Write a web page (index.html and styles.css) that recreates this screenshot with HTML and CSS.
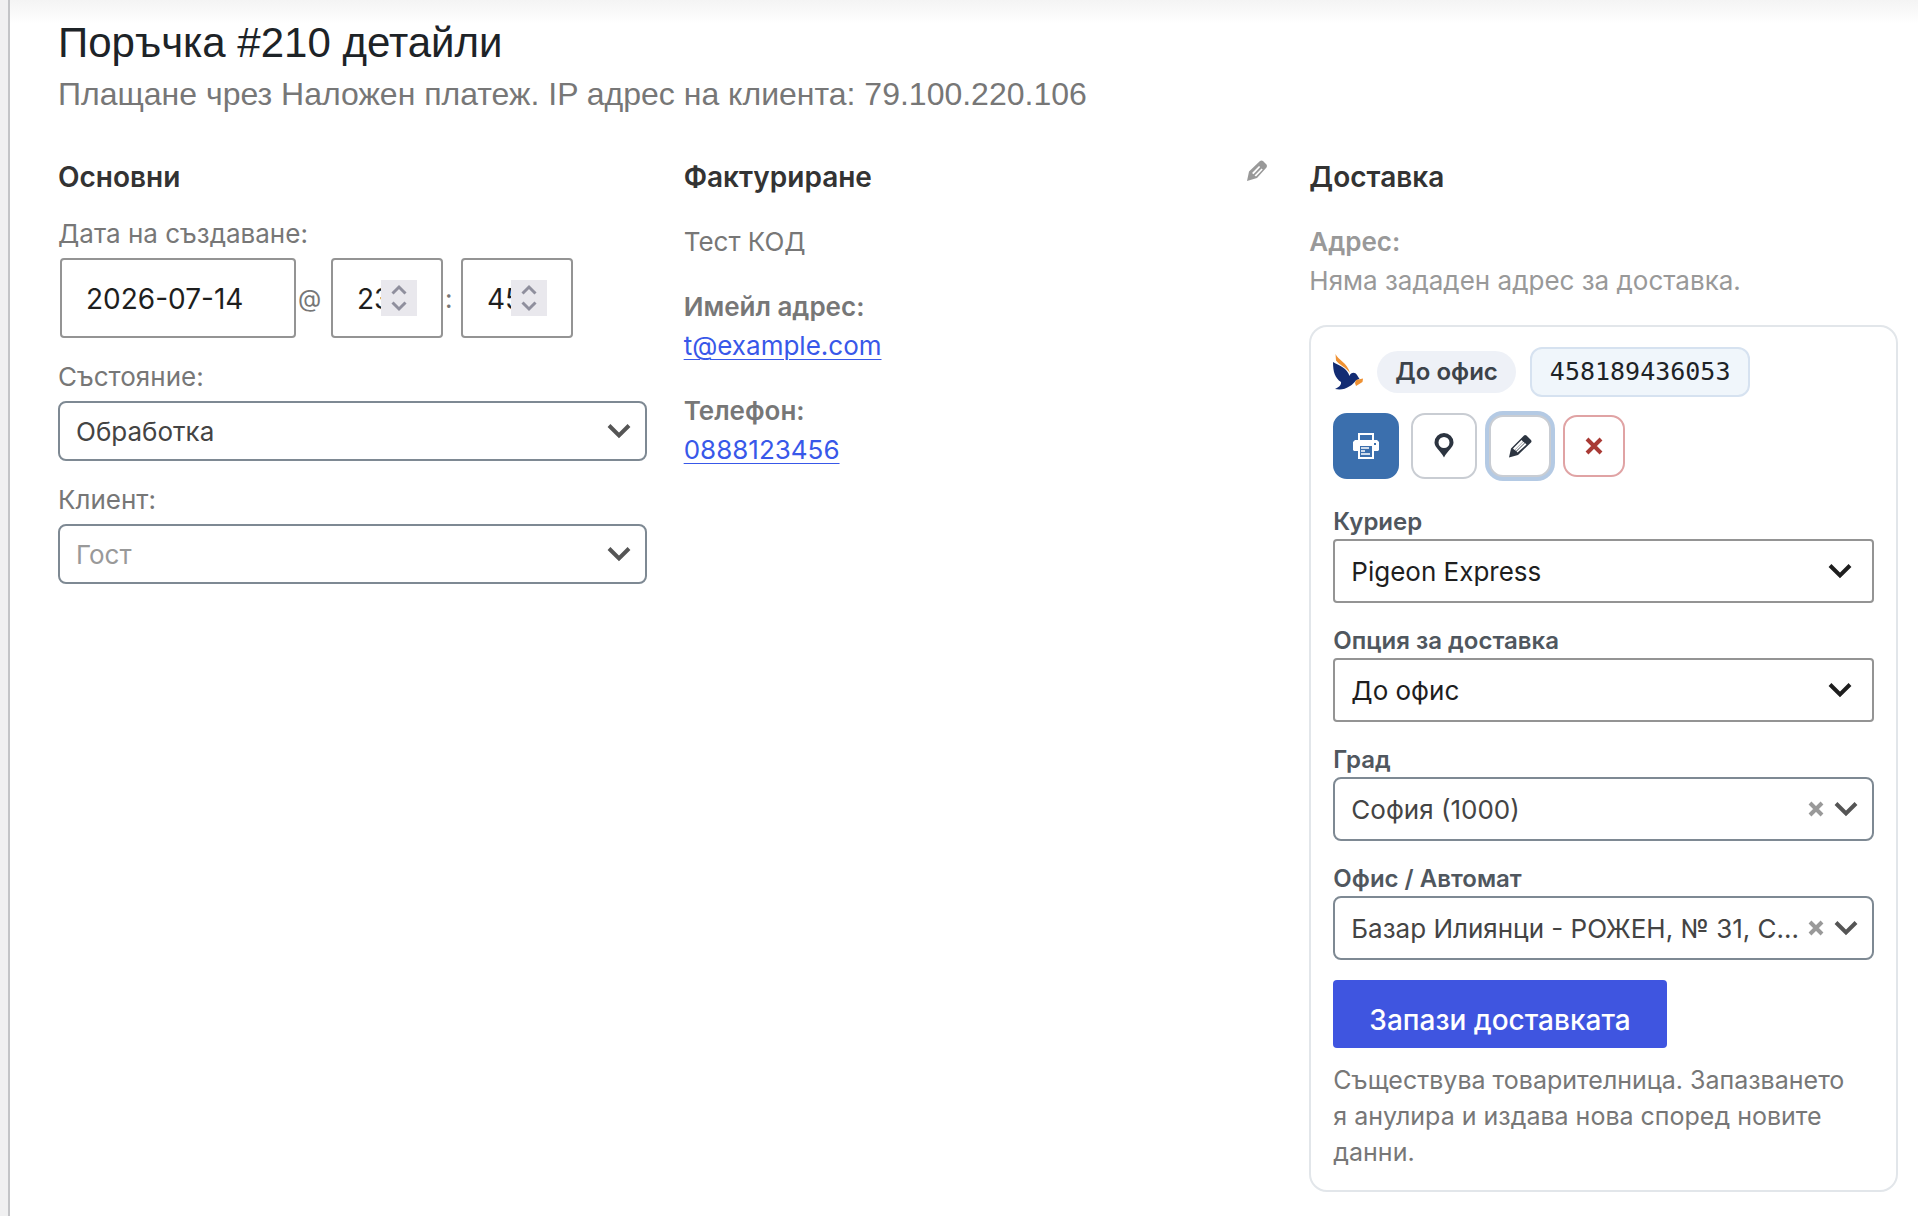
FILE: index.html
```html
<!DOCTYPE html>
<html lang="bg">
<head>
    <meta charset="UTF-8">
    <meta name="viewport" content="width=device-width, initial-scale=1.0">
    <title>Поръчка #210 детайли</title>
    <link rel="stylesheet" href="styles.css">
</head>
<body>
    <main class="order-panel">
        <header class="order-header">
            <h1>Поръчка #210 детайли</h1>
            <p>Плащане чрез Наложен платеж. IP адрес на клиента: 79.100.220.106</p>
        </header>
        <div class="order-columns">
            <section class="order-column">
                <h2>Основни</h2>
                <div class="form-fields">
                    <div class="form-field">
                        <label for="order-date">Дата на създаване:</label>
                        <div class="date-row">
                            <input type="text" class="date-input" id="order-date" value="2026-07-14">
                            <span class="date-at">@</span>
                            <div class="number-box">
                                <input type="number" class="number-input" value="23" min="0" max="23" aria-label="Час">
                                <span class="spinner">
                                    <svg viewBox="0 0 36 36" fill="none"><path d="M11.500 13.500l6.500-6.500 6.500 6.500M11.500 22.500l6.500 6.500 6.500-6.500"/></svg>
                                </span>
                            </div>
                            <span class="date-colon">:</span>
                            <div class="number-box">
                                <input type="number" class="number-input" value="45" min="0" max="59" aria-label="Минута">
                                <span class="spinner">
                                    <svg viewBox="0 0 36 36" fill="none"><path d="M11.500 13.500l6.500-6.500 6.500 6.500M11.500 22.500l6.500 6.500 6.500-6.500"/></svg>
                                </span>
                            </div>
                        </div>
                    </div>
                    <div class="form-field">
                        <label for="order-status">Състояние:</label>
                        <select class="select" id="order-status">
                            <option>Обработка</option>
                        </select>
                    </div>
                    <div class="form-field">
                        <label for="customer">Клиент:</label>
                        <select class="select select-empty" id="customer">
                            <option>Гост</option>
                        </select>
                    </div>
                </div>
            </section>

            <section class="order-column">
                <div class="column-heading">
                    <h2>Фактуриране</h2>
                    <button class="edit-address" aria-label="Редактиране">
                        <svg viewBox="0 0 22 22"><path fill-rule="evenodd" d="M14 1Q15.500 0 17 1L20.500 4.500Q21.500 6 20.500 7.500L11 18 1 21 3 11.500ZM13 6L6 13 7.500 14.200 14.200 7ZM15.500 8.500L8.500 15.500 10 16.500 16.700 9.500Z"/></svg>
                    </button>
                </div>
                <div class="address">
                    <p>Тест КОД</p>
                    <p><strong>Имейл адрес:</strong><br><a href="mailto:t@example.com">t@example.com</a></p>
                    <p><strong>Телефон:</strong><br><a href="tel:0888123456">0888123456</a></p>
                </div>
            </section>

            <section class="order-column">
                <h2>Доставка</h2>
                <div class="address address-empty">
                    <p><strong>Адрес:</strong><br>Няма зададен адрес за доставка.</p>
                </div>
                <div class="shipping-card">
                    <div class="shipment-row">
                        <svg class="courier-logo" viewBox="0 0 30 36">
                            <path fill="#ef9234" d="M2.500 0C5 6 14 8 17 19C13 13 6 11 3 6.500Z"/>
                            <path fill="#132c73" d="M0 8C7 12 14 14 16.500 22C17.500 18.500 22 17.500 24 21L26.500 25C22 26 22 29 17 32C12 35.500 7 36 2 35C6 33 8.500 31 8 28C2 24 0 18 0 8Z"/>
                            <path fill="#ef9234" d="M23 26L30 24.500 29.500 28 23 32 22 29Z"/>
                        </svg>
                        <span class="method-pill">До офис</span>
                        <span class="tracking-number">458189436053</span>
                    </div>
                    <div class="action-row">
                        <button class="action action-print" aria-label="Печат">
                            <svg viewBox="0 0 26 26">
                                <path fill="#fff" fill-rule="evenodd" d="M5 0H21V7H24L26 9V17L25 18H21V26H5V18H1L0 17V9L2 7H5ZM7 2V7H19V2ZM7 13V24H19V13ZM21 10V12H23V10Z"/>
                                <path stroke="#fff" stroke-width="1.500" d="M8 15h8M8 18h4M8 21h9"/>
                            </svg>
                        </button>
                        <button class="action" aria-label="Проследяване">
                            <svg viewBox="0 0 26 26"><path fill="#2c3440" fill-rule="evenodd" d="M13 0a9.500 9.500 0 0 1 9.500 9.500c0 5-6 8-9.500 15c-3.500-7-9.500-10-9.500-15a9.500 9.500 0 0 1 9.500-9.500ZM13 4a5.500 5.500 0 1 0 0 11a5.500 5.500 0 1 0 0-11Z"/></svg>
                        </button>
                        <button class="action action-small action-active" aria-label="Редактиране на доставката">
                            <svg viewBox="0 0 26 26"><path fill="#2c3440" fill-rule="evenodd" d="M17 2.500Q18 1.500 19.500 2.500L24 7Q25 8.500 24 9.500L11 22 2 24.500 4 15.500ZM14.500 7L6 15.500 7.500 17 16 8.500ZM18 10L9.500 18.500 10.500 19.500 19.500 11.500ZM16.200 8.700L8 17 9 18 17.500 9.800Z"/></svg>
                        </button>
                        <button class="action action-small action-delete" aria-label="Изтриване">
                            <svg viewBox="0 0 26 26"><path stroke="#a93a35" stroke-width="4" d="M6 6l14 14M20 6l-14 14"/></svg>
                        </button>
                    </div>
                    <div class="shipping-form">
                        <div class="shipping-field">
                            <label for="courier">Куриер</label>
                            <select class="select select-tall select-plain" id="courier">
                                <option>Pigeon Express</option>
                            </select>
                        </div>
                        <div class="shipping-field">
                            <label for="delivery-option">Опция за доставка</label>
                            <select class="select select-tall select-plain" id="delivery-option">
                                <option>До офис</option>
                            </select>
                        </div>
                        <div class="shipping-field">
                            <label for="city">Град</label>
                            <div class="clearable">
                                <select class="select select-tall" id="city">
                                    <option>София (1000)</option>
                                </select>
                                <button class="clear" aria-label="Изчисти града">
                                    <svg viewBox="0 0 16 16"><path d="M2 2l12 12M14 2L2 14"/></svg>
                                </button>
                            </div>
                        </div>
                        <div class="shipping-field">
                            <label for="office">Офис / Автомат</label>
                            <div class="clearable">
                                <select class="select select-tall" id="office">
                                    <option>Базар Илиянци - РОЖЕН, № 31, С...</option>
                                </select>
                                <button class="clear" aria-label="Изчисти офиса">
                                    <svg viewBox="0 0 16 16"><path d="M2 2l12 12M14 2L2 14"/></svg>
                                </button>
                            </div>
                        </div>
                        <button class="save-button">Запази доставката</button>
                    </div>
                    <p class="shipping-note">Съществува товарителница. Запазването я анулира и издава нова според новите данни.</p>
                </div>
            </section>
        </div>
    </main>
</body>
</html>
```
FILE: styles.css
```css
* {
    box-sizing: border-box;
}
body {
    margin: 0;
    padding-left: 8px;
    min-height: 100vh;
    display: flex;
    background: #f0f0f1;
    color: #777;
    font-family: Inter, "Noto Sans", sans-serif;
    font-size: 26px;
}
h1, h2, p {
    margin: 0;
}
button, input, select {
    margin: 0;
    font-family: inherit;
}
svg {
    display: block;
}
.order-panel {
    flex: 1;
    min-width: 0;
    padding: 18px 20px 24px 48px;
    border-left: 2px solid #c3c4c7;
    background: linear-gradient(#f4f4f4, #fff 24px);
}
.order-header {
    margin-bottom: 46px;
    font-family: "Liberation Sans", Arial, sans-serif;
}
.order-header h1 {
    margin-bottom: 6px;
    color: #1d2327;
    font-size: 42px;
    font-weight: 400;
    line-height: 50px;
}
.order-header p {
    font-size: 32px;
    line-height: 40px;
}
.order-columns {
    display: grid;
    grid-template-columns: repeat(3, minmax(0, 1fr));
    gap: 37px;
}
h2 {
    color: #333;
    font-size: 28px;
    font-weight: 600;
    line-height: 34px;
}

/* general column */
.form-fields {
    display: flex;
    flex-direction: column;
    gap: 21px;
    margin-top: 22px;
}
.form-field label {
    display: block;
    margin-bottom: 6px;
    line-height: 36px;
}
.date-row {
    display: flex;
    align-items: center;
    margin-left: 2px;
}
.date-input, .number-input {
    height: 80px;
    padding: 2px 0 0 24px;
    border: 2px solid #949494;
    border-radius: 4px;
    background: #fff;
    color: #1e1e1e;
    font-size: 28px;
}
.date-input {
    width: 236px;
}
.number-input {
    display: block;
    width: 112px;
    appearance: textfield;
}
.number-input::-webkit-inner-spin-button {
    display: none;
}
.number-box {
    position: relative;
}
.spinner {
    position: absolute;
    top: 22px;
    right: 26px;
    width: 36px;
    height: 36px;
    background: #e9e8ed;
}
.spinner path {
    stroke: #8f8f9d;
    stroke-width: 3;
}
.date-at {
    width: 35px;
    padding-left: 2px;
    font-size: 24px;
}
.date-colon {
    width: 18px;
    padding-left: 2px;
}

/* selects */
.select {
    display: block;
    width: 100%;
    height: 60px;
    padding: 0 70px 0 16px;
    appearance: none;
    border: 2px solid #7e8993;
    border-radius: 8px;
    background: #fff url("data:image/svg+xml,%3Csvg xmlns='http://www.w3.org/2000/svg' viewBox='0 0 24 16'%3E%3Cpath d='M2 2.500l10 10 10-10' fill='none' stroke='%23555' stroke-width='4'/%3E%3C/svg%3E") no-repeat right 14px center / 24px 16px;
    color: #444;
    font-size: 26px;
}
.select-empty {
    color: #999;
}
.select-tall {
    height: 64px;
}
.select-plain {
    border-color: #949494;
    border-radius: 4px;
    background-image: url("data:image/svg+xml,%3Csvg xmlns='http://www.w3.org/2000/svg' viewBox='0 0 24 16'%3E%3Cpath d='M2 2.500l10 10 10-10' fill='none' stroke='%231e1e1e' stroke-width='4'/%3E%3C/svg%3E");
    background-position: right 20px center;
    color: #1e1e1e;
}

/* addresses */
.column-heading {
    display: flex;
    justify-content: space-between;
    align-items: flex-start;
}
.edit-address {
    padding: 0;
    margin-right: 4px;
    border: 0;
    background: none;
    cursor: pointer;
}
.edit-address svg {
    width: 22px;
    height: 22px;
    fill: #999;
}
.address {
    margin-top: 28px;
    line-height: 39px;
}
.address p + p {
    margin-top: 26px;
}
.address strong {
    font-weight: 600;
}
.address a {
    color: #3858e9;
    text-decoration-thickness: 1px;
    text-underline-offset: 4px;
}
.address-empty {
    color: #999;
}

/* shipment */
.shipping-card {
    margin-top: 25px;
    padding: 20px 22px;
    border: 2px solid #e2e6ea;
    border-radius: 18px;
}
.shipment-row {
    display: flex;
    align-items: center;
    gap: 14px;
    margin-bottom: 16px;
}
.courier-logo {
    width: 30px;
    height: 36px;
}
.method-pill {
    padding: 0 18px;
    border-radius: 21px;
    background: #eef1f7;
    color: #3c434a;
    font-size: 24px;
    font-weight: 600;
    line-height: 42px;
}
.tracking-number {
    padding: 0 18px;
    border: 2px solid #d6e2f0;
    border-radius: 12px;
    background: #f0f6fb;
    color: #1d2327;
    font-family: "DejaVu Sans Mono", monospace;
    font-size: 25px;
    line-height: 46px;
}
.action-row {
    display: flex;
    align-items: center;
    gap: 12px;
}
.action {
    display: flex;
    align-items: center;
    justify-content: center;
    width: 66px;
    height: 66px;
    padding: 0;
    border: 2px solid #c9cdd3;
    border-radius: 14px;
    background: #fff;
    cursor: pointer;
}
.action svg {
    width: 26px;
    height: 26px;
}
.action-small {
    width: 62px;
    height: 62px;
}
.action-print {
    border-color: #3b6fad;
    background: #3b6fad;
}
.action-active {
    box-shadow: 0 0 0 4px #b4cae4;
}
.action-delete {
    border-color: #e0a3a4;
}
.shipping-form {
    display: flex;
    flex-direction: column;
    align-items: flex-start;
    gap: 20px;
    margin-top: 25px;
}
.shipping-field {
    width: 100%;
}
.shipping-field label {
    display: block;
    color: #50575e;
    font-size: 24px;
    font-weight: 600;
    line-height: 35px;
}
.clearable {
    position: relative;
}
.clear {
    position: absolute;
    top: 24px;
    right: 50px;
    padding: 0;
    border: 0;
    background: none;
    cursor: pointer;
}
.clear svg {
    width: 16px;
    height: 16px;
}
.clear path {
    stroke: #999;
    stroke-width: 4;
}
.save-button {
    height: 68px;
    padding: 12px 36px 0;
    border: 0;
    border-radius: 4px;
    background: #3f55e0;
    color: #fff;
    font-size: 28px;
    font-weight: 500;
    cursor: pointer;
}
.shipping-note {
    margin-top: 14px;
    padding-right: 16px;
    font-size: 25px;
    line-height: 36px;
}
```
